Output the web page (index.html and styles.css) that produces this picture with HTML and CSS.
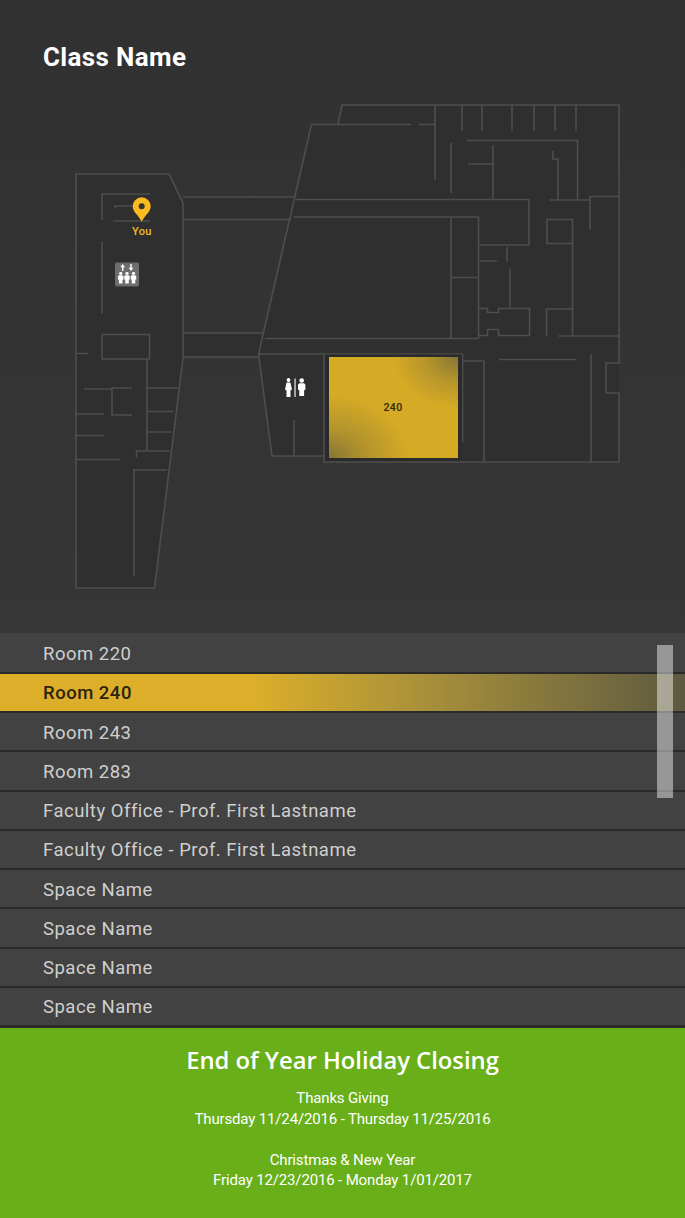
FILE: index.html
```html
<!DOCTYPE html>

<html>

<head>
	<title>Class Name</title>
	<link rel="stylesheet" href="styles.css">
</head>

<body>
	<div class="page">
		<section class="map">
			<h1 class="title">Class Name</h1>
			<svg class="plan" viewBox="0 0 685 633" width="685" height="633">
				<defs>
					<radialGradient id="shadeTop" cx="1" cy="0" r="0.5">
						<stop offset="0" stop-color="#7f7238" stop-opacity=".95" />
						<stop offset="0.5" stop-color="#8f7c33" stop-opacity=".45" />
						<stop offset="1" stop-color="#8f7c33" stop-opacity="0" />
					</radialGradient>
					<radialGradient id="shadeBottom" cx="0" cy="1" r="0.62">
						<stop offset="0" stop-color="#7f7238" stop-opacity=".95" />
						<stop offset="0.5" stop-color="#8f7c33" stop-opacity=".45" />
						<stop offset="1" stop-color="#8f7c33" stop-opacity="0" />
					</radialGradient>
					<g id="person">
						<circle cx="0" cy="1.6" r="1.6" />
						<path d="M-1.7 3.6h3.4l.9 1v3.6l-.9.3v4.1h-3.4v-4.1l-.9-.3v-3.6z" />
					</g>
				</defs>

				<!-- floors -->
				<path class="floor" d="M76 174H169L183 203V358L154.500 588H76Z" />
				<path class="floor" d="M183 197H295L291 219.500H183ZM183 333H263L258 357H183Z" />
				<path class="floor" d="M342 105H619V462H324V456H272L258.500 354L311.500 124.500H338Z" />

				<!-- walls -->
				<path class="wall" d="M76 174H169L183 203V358L154.500 588H76Z" />
				<path class="wall" d="M183 197H295M183 219.500H291M183 333H263M183 357H258" />
				<path class="wall" d="M102 220V194H150M115 208V206H133M113 221H150M102 241.500V313.500" />
				<path class="wall" d="M102 334.500H149.500V359H102ZM76 353.500H88M147 359V450M147 388H178.500M147 411.500H173.500M147 432H171" />
				<path class="wall" d="M136.500 457.500V451H170M84 389H112M132 388H112V415H132M76 414H104M76 435.500H104M76 459.500H120M134 576V470H167" />

				<path class="wall" d="M338 124.500L342 105H619V363H606V393H619V462H324V354M311.500 124.500L258.500 354L272 456H324M258.500 354H462.500V442" />
				<path class="wall" d="M311.500 124.500H411M419 124.500H435M435 105V180M462 105V131M482 105V131M512 105V131M534 105V131M555 105V131M576 105V131M451 143V193" />
				<path class="wall" d="M467 140.500H577.500V200M493 145V199M468 164H493M553 151V159H558V200M550 200H590M590 229.500V196.500H619" />
				<path class="wall" d="M295.500 199.500H529V245H479M293.500 217H478.500V338.500M265 338.500H478.500M451 217V338M451 277.500H478M547 219.500H572.500V243.500H547ZM572.500 243.500V336" />
				<path class="wall" d="M546.500 336V309H572.500M558.500 336H619" />
				<path class="wall" d="M479 308.500H487.500V312.500H498.500V308.500H529.500V335.500H498.500V329.500H487.500V335.500H479M510 268.500V308.500M507 247V261.500M480 261H497" />
				<path class="wall" d="M294 420V456M462.500 361H484V462M499 359.500H576M591 354V462" />

				<!-- selected room -->
				<rect class="room-edge" x="325" y="354.500" width="137" height="106" />
				<rect class="room-fill" x="329" y="357" width="129" height="101" />
				<rect x="329" y="357" width="129" height="101" fill="url(#shadeTop)" />
				<rect x="329" y="357" width="129" height="101" fill="url(#shadeBottom)" />
				<text class="room-label" x="393" y="411">240</text>

				<!-- you are here -->
				<path class="pin" d="M141.700 221.700C138 214.500 132.700 212 132.700 206.300a9 9 0 0 1 18 0C150.700 212 145.400 214.500 141.700 221.700Z" />
				<circle class="pin-hole" cx="141.700" cy="206.300" r="3" />
				<text class="you" x="141.800" y="235">You</text>

				<!-- elevator -->
				<rect class="lift" x="115" y="262.500" width="24" height="24" rx="2" />
				<path class="icon" d="M122.700 264L125 267.200H123.400V271H122V267.200H120.400ZM131 271L128.700 267.800H130.300V264H131.700V267.800H133.300Z" />
				<use class="icon" href="#person" transform="translate(120.700 272) scale(1.05 .92)" />
				<use class="icon" href="#person" transform="translate(127 272) scale(1.05 .92)" />
				<use class="icon" href="#person" transform="translate(133.500 272) scale(1.05 .92)" />

				<!-- restroom -->
				<circle class="icon" cx="288.500" cy="380" r="1.900" />
				<path class="icon" d="M286.600 382.500H290.400L292 389.500L290.500 390.500V397H286.500V390.500L285 389.500Z" />
				<rect class="divider" x="294.300" y="378.500" width="1.500" height="18.500" />
				<use class="icon" href="#person" transform="translate(301.700 378.200) scale(1.420)" />
			</svg>
		</section>

		<section class="rooms">
			<div class="room-row">Room 220</div>
			<div class="room-row selected">Room 240</div>
			<div class="room-row">Room 243</div>
			<div class="room-row">Room 283</div>
			<div class="room-row">Faculty Office - Prof. First Lastname</div>
			<div class="room-row">Faculty Office - Prof. First Lastname</div>
			<div class="room-row">Space Name</div>
			<div class="room-row">Space Name</div>
			<div class="room-row">Space Name</div>
			<div class="room-row">Space Name</div>
			<div class="scroll-thumb"></div>
		</section>

		<section class="notice">
			<h2>End of Year Holiday Closing</h2>
			<p>Thanks Giving<br>Thursday 11/24/2016 - Thursday 11/25/2016</p>
			<p>Christmas &amp; New Year<br>Friday 12/23/2016 - Monday 1/01/2017</p>
		</section>
	</div>
</body>

</html>
```

FILE: styles.css
```css
body {
	margin: 0;
	background: #333;
	color: #fff;
	font-family: Roboto, "Liberation Sans", sans-serif;
}

.page {
	display: flex;
	flex-direction: column;
	width: 685px;
	height: 1218px;
	overflow: hidden;
}

.map {
	position: relative;
	height: 633px;
	background: linear-gradient(#313131, #363636);
}

.title {
	position: absolute;
	left: 43px;
	top: 41px;
	margin: 0;
	font-size: 26px;
	line-height: 32px;
	font-weight: 700;
	letter-spacing: .35px;
}

.plan {
	display: block;
}

.floor {
	fill: #2f2f2f;
}

.wall {
	fill: none;
	stroke: #4e4e4e;
	stroke-width: 1.6;
}

.room-edge {
	fill: #2b2b2b;
}

.room-fill {
	fill: #d5aa25;
}

.room-label {
	fill: #2f2611;
	font-size: 10.500px;
	font-weight: 500;
	letter-spacing: .4px;
	text-anchor: middle;
}

.pin {
	fill: #fcbb1f;
}

.pin-hole {
	fill: #333;
}

.you {
	fill: #f4bb2a;
	font-size: 11px;
	font-weight: 500;
	letter-spacing: .3px;
	text-anchor: middle;
}

.lift {
	fill: #6d6d6d;
}

.icon {
	fill: #fff;
}

.divider {
	fill: #c8c8c8;
}

.rooms {
	position: relative;
	display: flex;
	flex-direction: column;
	height: 394px;
	padding-top: 1.500px;
	box-sizing: border-box;
	background: #424242;
}

.room-row {
	flex: 1;
	display: flex;
	align-items: center;
	padding: 2px 0 0 43px;
	background: #424242;
	border-bottom: 2px solid #2a2a2a;
	color: #cfcfcf;
	font-size: 18.500px;
	letter-spacing: .5px;
}

.room-row:last-of-type {
	border-bottom: 0;
}

.room-row.selected {
	background: linear-gradient(90deg, #dcae2a 0, #dcae2a 37%, #a8903a 62%, #5e5a40 100%);
	color: #2b2210;
	font-weight: 500;
}

.scroll-thumb {
	position: absolute;
	left: 657px;
	top: 12px;
	width: 16px;
	height: 153px;
	background: rgba(255, 255, 255, .45);
}

.notice {
	flex: 1;
	background: #68af1a;
	border-top: 1px solid #2a2a2a;
	text-align: center;
}

.notice h2 {
	margin: 16px 0 12px;
	font-family: "Open Sans", sans-serif;
	font-size: 23.800px;
	line-height: 32px;
	font-weight: 600;
}

.notice p {
	margin: 0 0 20.500px;
	font-size: 15px;
	line-height: 20.500px;
	letter-spacing: -.15px;
}
```
